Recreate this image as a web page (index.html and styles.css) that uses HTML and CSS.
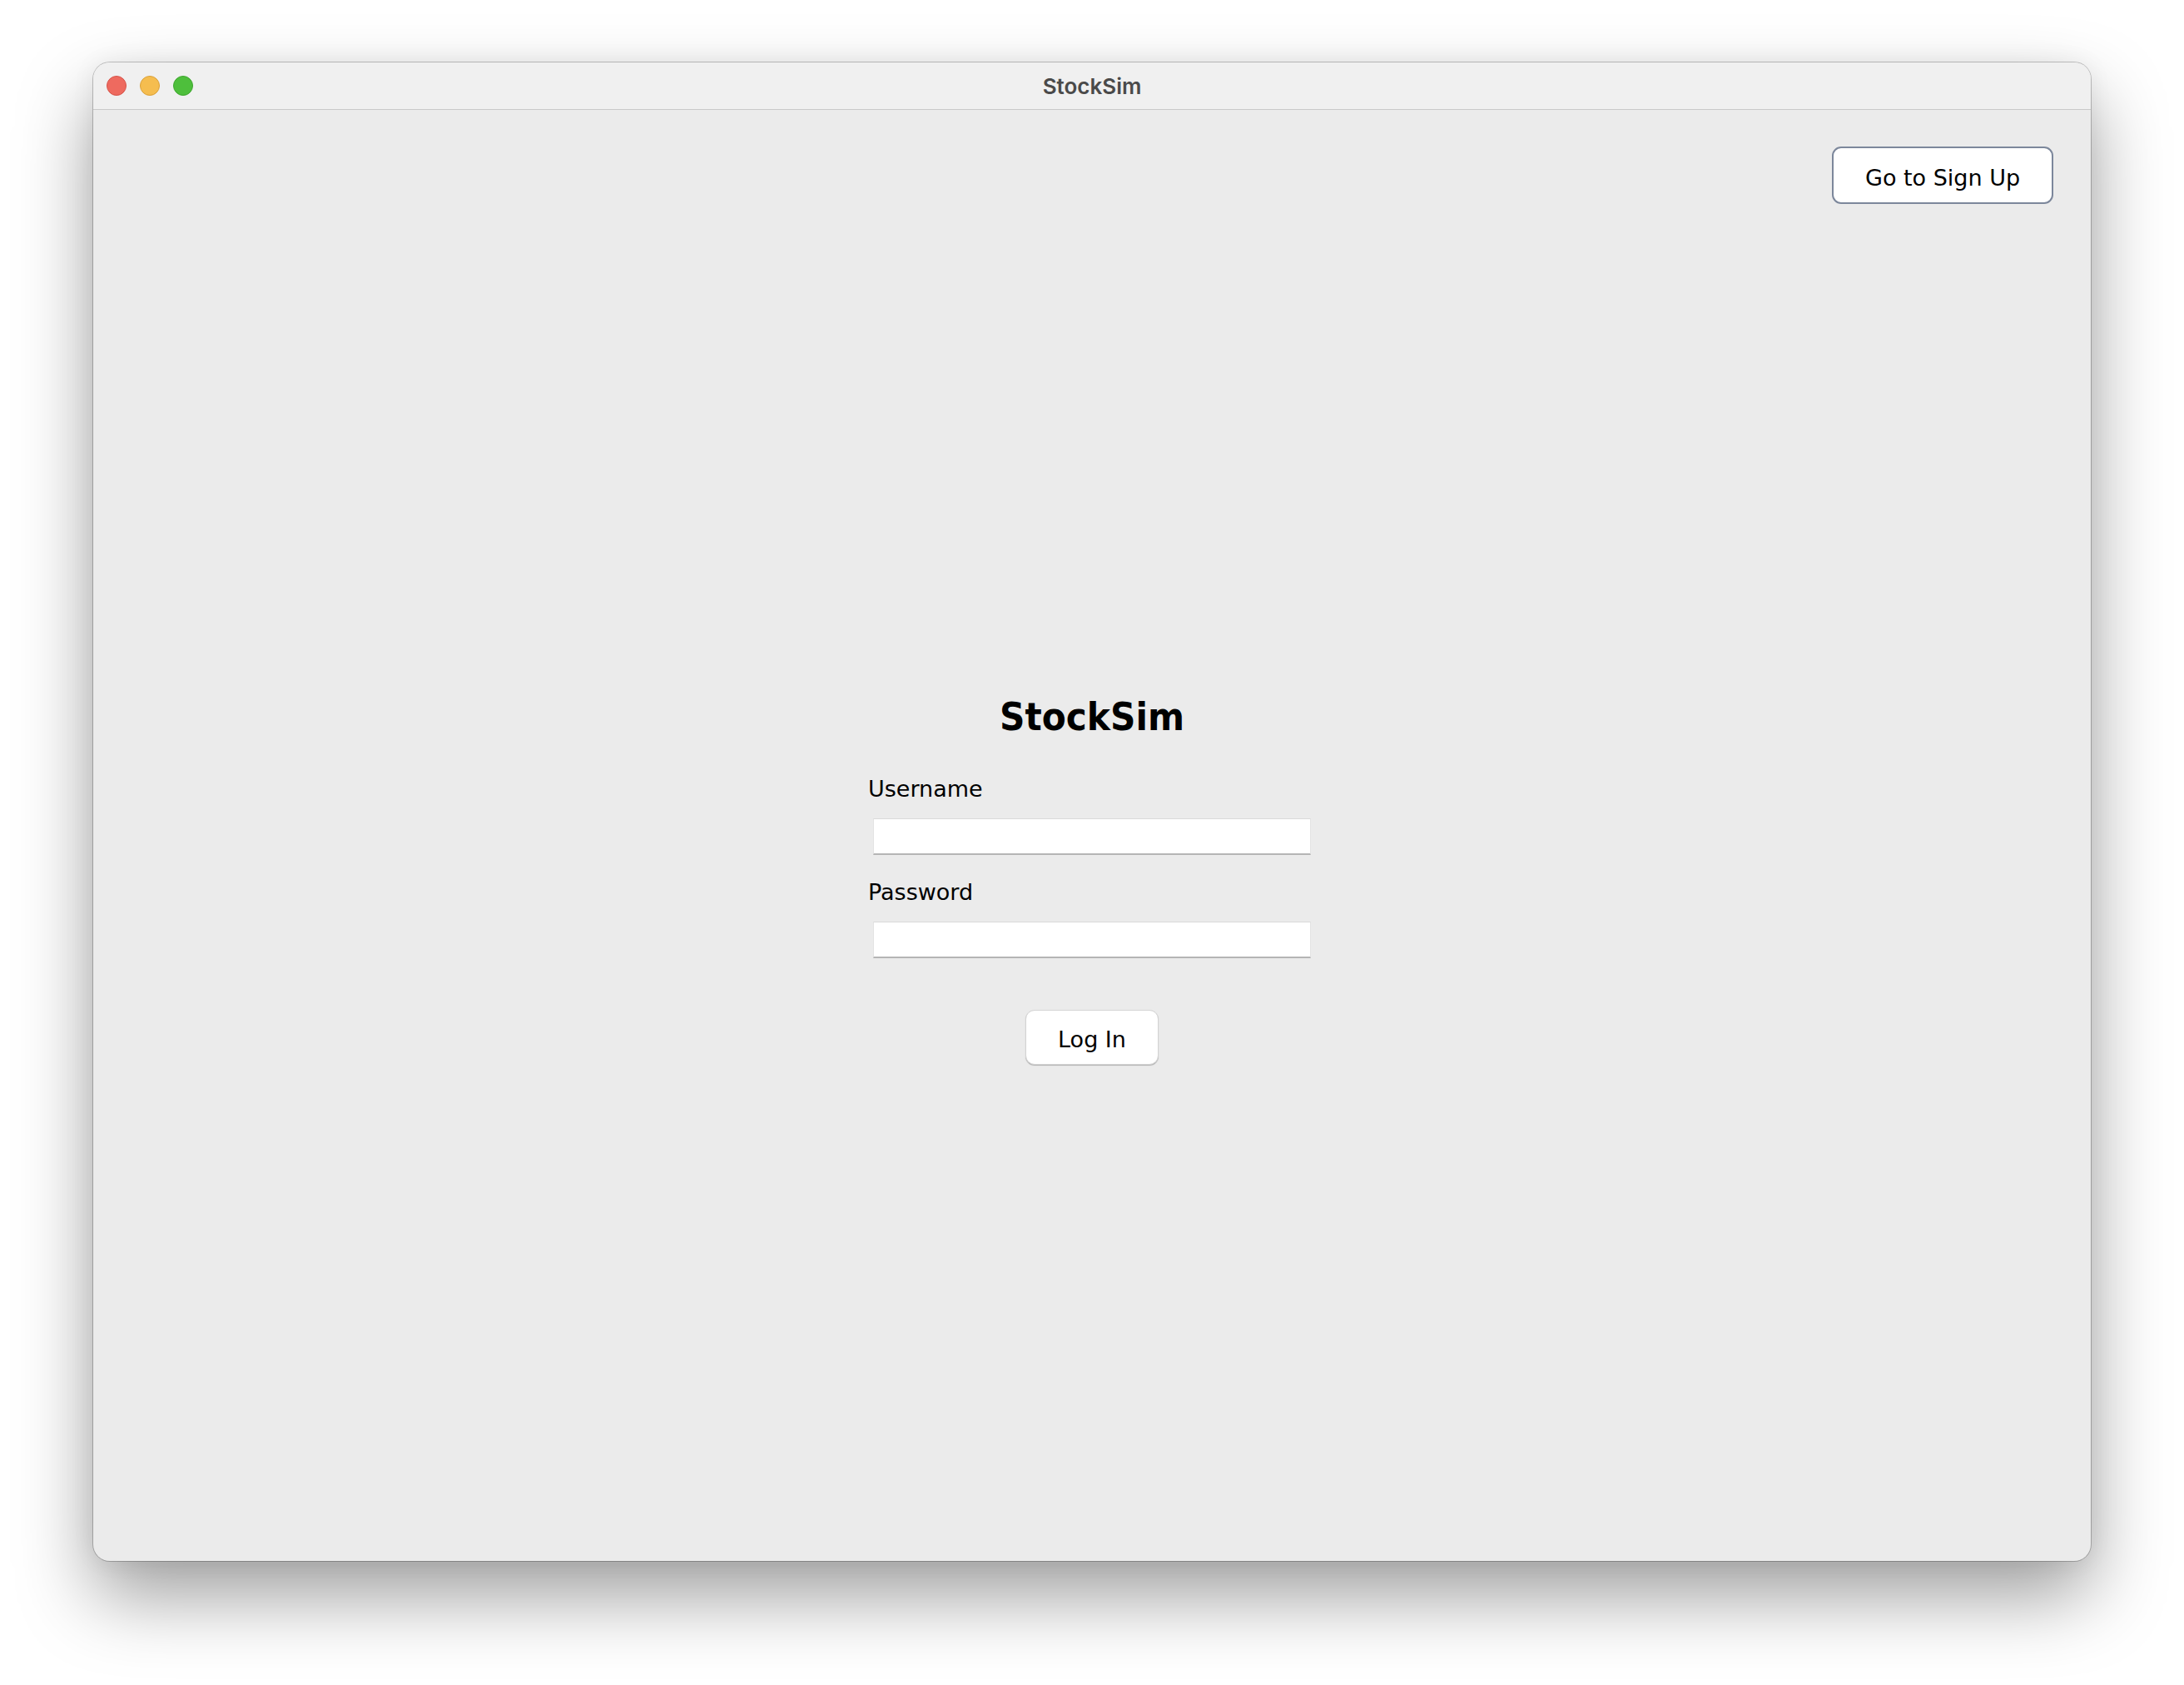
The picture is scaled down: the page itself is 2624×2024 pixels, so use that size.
FILE: index.html
```html
<!DOCTYPE html>
<html>
<head>
<meta charset="utf-8">
<title>StockSim</title>
<link rel="stylesheet" href="styles.css">
</head>
<body>
<div class="desktop">
  <div class="window">
    <div class="titlebar">
      <div class="lights">
        <span class="light red"></span>
        <span class="light yellow"></span>
        <span class="light green"></span>
      </div>
      <div class="title">StockSim</div>
    </div>
    <div class="content">
      <div class="topbar">
        <button class="btn-signup">Go to Sign Up</button>
      </div>
      <div class="form">
        <h1 class="heading">StockSim</h1>
        <label class="label label-first">Username</label>
        <div class="field"></div>
        <label class="label">Password</label>
        <div class="field"></div>
        <button class="btn-login">Log In</button>
      </div>
    </div>
  </div>
</div>
</body>
</html>
```

FILE: styles.css
```css
html, body {
  margin: 0;
  padding: 0;
  background: #ffffff;
}
body {
  width: 2624px;
  height: 2024px;
  overflow: hidden;
  font-family: "DejaVu Sans", "Liberation Sans", sans-serif;
}
.desktop {
  padding: 75px 0 0 112px;
}
.window {
  width: 2400px;
  height: 1800px;
  border-radius: 20px;
  background: #ebebeb;
  overflow: hidden;
  box-shadow: 0 0 0 1px rgba(0, 0, 0, 0.22), 0 42px 90px rgba(0, 0, 0, 0.38), 0 0 30px rgba(0, 0, 0, 0.06);
  display: flex;
  flex-direction: column;
}
.titlebar {
  height: 57px;
  flex: 0 0 57px;
  box-sizing: border-box;
  background: #f0f0f0;
  border-bottom: 1px solid #c9c9c9;
  display: flex;
  align-items: center;
  position: relative;
}
.lights {
  display: flex;
  gap: 16px;
  padding-left: 16px;
  position: absolute;
  left: 0;
  top: 16px;
}
.light {
  width: 24px;
  height: 24px;
  border-radius: 50%;
  box-sizing: border-box;
  display: block;
}
.red { background: #ee6a5f; border: 1px solid #d5544a; }
.yellow { background: #f5bd4f; border: 1px solid #d9a03a; }
.green { background: #4ebf3c; border: 1px solid #3ea52e; }
.title {
  flex: 1;
  text-align: center;
  font-family: "Inter", "Noto Sans", sans-serif;
  font-weight: 600;
  font-size: 26px;
  color: #4a4a4a;
  line-height: 57px;
}
.content {
  flex: 1;
  display: flex;
  flex-direction: column;
}
.topbar {
  display: flex;
  justify-content: flex-end;
  padding: 44px 45px 0 0;
}
.btn-signup {
  width: 266px;
  height: 69px;
  box-sizing: border-box;
  border: 2px solid #7c879b;
  border-radius: 11px;
  background: #ffffff;
  font-family: "DejaVu Sans", sans-serif;
  font-size: 27px;
  color: #000;
  padding: 5px 0 0 0;
}
.form {
  align-self: center;
  width: 538px;
  margin-top: 586px;
  display: flex;
  flex-direction: column;
}
.heading {
  margin: 0;
  text-align: center;
  font-family: "DejaVu Sans Condensed", "DejaVu Sans", sans-serif;
  font-stretch: condensed;
  font-weight: bold;
  font-size: 47px;
  line-height: 60px;
  color: #000;
}
.label {
  display: block;
  font-size: 27px;
  line-height: 34px;
  color: #000;
  margin-top: 28px;
}
.label-first {
  margin-top: 40px;
}
.field {
  margin: 18px 6px 0 6px;
  height: 44px;
  box-sizing: border-box;
  background: #ffffff;
  border-top: 1px solid #d9d9d9;
  border-left: 1px solid #e3e3e3;
  border-right: 1px solid #e3e3e3;
  border-bottom: 2px solid #b5b5b5;
}
.btn-login {
  align-self: center;
  margin-top: 62px;
  width: 160px;
  height: 66px;
  box-sizing: border-box;
  border: 1px solid #d4d4d4;
  border-radius: 11px;
  background: #ffffff;
  box-shadow: 0 1px 1px rgba(0, 0, 0, 0.25);
  font-family: "DejaVu Sans", sans-serif;
  font-size: 27px;
  color: #000;
  padding: 5px 0 0 0;
}
```
